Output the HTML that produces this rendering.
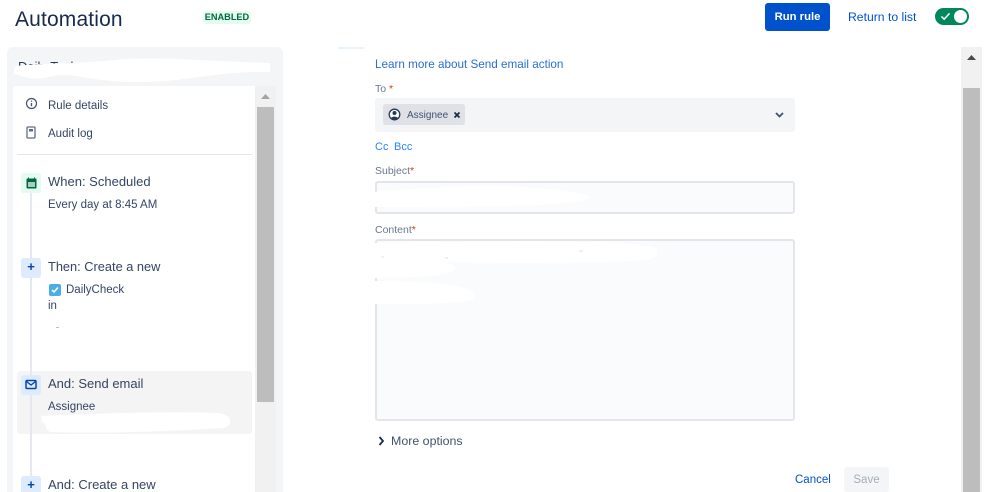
<!DOCTYPE html>
<html><head><meta charset="utf-8"><style>
html,body{margin:0;padding:0;background:#fff}
#p{position:relative;width:999px;height:492px;overflow:hidden;background:#fff;font-family:"Liberation Sans",sans-serif;color:#42526e;font-size:12px}
#p div,#p span.a,#p svg{position:absolute}
.t{white-space:nowrap;line-height:16px}
.big{font-size:13px;color:#344563}
.s{font-size:11.5px;color:#344563}
.lnk{color:#0052cc}
.lab{font-size:10.5px;color:#6b778c}
.req{color:#de350b}
.ic{width:20px;height:20px;border-radius:3px;left:21px}
</style></head><body><div id="p">
<div class="t" style="left:15px;top:7px;font-size:21px;line-height:26px;color:#172b4d;letter-spacing:.15px">Automation</div>
<div style="left:203px;top:11px;width:48px;height:13px;background:#e3fcef;border-radius:3px"></div>
<div class="t" style="left:203px;top:11px;width:48px;color:#006644;font-size:9.2px;font-weight:bold;line-height:13px;text-align:center">ENABLED</div>
<div class="t" style="left:765px;top:3px;width:65px;height:28px;background:#0052cc;border-radius:3px;color:#fff;font-weight:bold;font-size:11.3px;line-height:28px;text-align:center">Run rule</div>
<div class="t lnk" style="left:848px;top:9px;font-size:12.2px">Return to list</div>
<div style="left:935px;top:8px;width:34px;height:17px;background:#00875a;border-radius:9px"></div>
<div style="left:954px;top:10px;width:13px;height:13px;background:#fff;border-radius:50%"></div>
<svg style="left:940px;top:12px" width="11" height="9" viewBox="0 0 12 10"><path d="M1.500 5l3 3 6-6.500" fill="none" stroke="#fff" stroke-width="1.700"/></svg>

<div style="left:7px;top:47px;width:276px;height:460px;background:#f4f5f7;border-radius:6px"></div>
<div class="t" style="left:18px;top:59px;font-size:13px;color:#253858">Daily Tasks</div>
<div class="t" style="left:242px;top:58px;font-size:11px;color:#8993a4">...</div>
<svg style="left:14px;top:58px" width="258" height="26" viewBox="0 0 258 26"><path d="M2 8C30 5 60 6 100 2S170 2 256 5v9C200 13 170 25 120 24S60 14 40 18 18 21 4 17 1 12 2 8z" fill="#fff"/></svg>
<div style="left:13px;top:86px;width:242px;height:406px;background:#fff;border-radius:3px 0 0 0"></div>
<div style="left:255px;top:86px;width:21px;height:406px;background:#f1f1f1"></div>
<div style="left:257px;top:107px;width:17px;height:295px;background:#bdbdbd"></div>
<svg style="left:260px;top:93px" width="11" height="7" viewBox="0 0 11 7"><path d="M5.500 1L10 6H1z" fill="#a3a3a3"/></svg>

<svg style="left:25px;top:97px" width="13" height="13" viewBox="0 0 13 13"><circle cx="6.500" cy="6.500" r="5" fill="none" stroke="#42526e" stroke-width="1.200"/><path d="M6.500 6v3.200M6.500 3.600v1.200" stroke="#42526e" stroke-width="1.300"/></svg>
<div class="t s" style="left:48px;top:97px;padding-top:1px">Rule details</div>
<svg style="left:26px;top:126px" width="11" height="13" viewBox="0 0 11 13"><rect x="1" y="1" width="8" height="11" rx="1" fill="none" stroke="#5e6c84" stroke-width="1.300"/><rect x="3" y="3" width="4" height="2.500" fill="#5e6c84"/></svg>
<div class="t s" style="left:48px;top:126px">Audit log</div>
<div style="left:17px;top:154px;width:235px;height:1px;background:#e4e6ea"></div>

<div style="left:30px;top:190px;width:2px;height:302px;background:#e6e8ef"></div>

<div class="ic" style="top:173px;background:#e3fcef"></div>
<svg style="left:26px;top:177px" width="11" height="12" viewBox="0 0 11 12"><rect x=".5" y="1.500" width="10" height="10" rx="1" fill="#006644"/><path d="M2.500 .5v2M8.500 .5v2" stroke="#006644"/><rect x="2" y="5" width="7" height="5" fill="#9fd3bd"/></svg>
<div class="t big" style="left:48px;top:174px">When: Scheduled</div>
<div class="t s" style="left:48px;top:197px">Every day at 8:45 AM</div>

<div class="ic" style="top:258px;background:#deebff"></div>
<div class="t" style="left:21px;top:259px;width:20px;text-align:center;color:#0747a6;font-weight:bold;font-size:13px">+</div>
<div class="t big" style="left:48px;top:259px;font-size:12.8px">Then: Create a new</div>
<div style="left:49px;top:284px;width:12px;height:12px;background:#4bade8;border-radius:2px"></div>
<svg style="left:50px;top:285px" width="10" height="10" viewBox="0 0 10 10"><path d="M2 5l2 2 4-4.500" fill="none" stroke="#fff" stroke-width="1.600"/></svg>
<div class="t s" style="left:66px;top:282px">DailyCheck</div>
<div class="t s" style="left:48px;top:298px">in</div>
<div style="left:56px;top:327px;width:3px;height:1px;background:#a9c4e4"></div>

<div style="left:17px;top:371px;width:235px;height:63px;background:#f4f4f4;border-radius:3px"></div>
<div style="left:30px;top:371px;width:2px;height:63px;background:#e6e8ef"></div>
<div class="ic" style="top:375px;background:#deebff"></div>
<svg style="left:25px;top:379px" width="12" height="11" viewBox="0 0 12 11"><rect x="1" y="1.500" width="10" height="8" rx="1" fill="none" stroke="#0747a6" stroke-width="1.500"/><path d="M1.500 2.500L6 6l4.500-3.500" fill="none" stroke="#0747a6" stroke-width="1.300"/></svg>
<div class="t big" style="left:48px;top:376px">And: Send email</div>
<div class="t s" style="left:48px;top:399px">Assignee</div>
<svg style="left:38px;top:411px" width="196" height="23" viewBox="0 0 196 23"><path d="M3 5C50 3 120 0 180 2c14 1 16 12 6 15C140 20 60 23 12 21 6 18 9 12 4 11z" fill="#fff"/></svg>

<div class="ic" style="top:476px;background:#deebff"></div>
<div class="t" style="left:21px;top:477px;width:20px;text-align:center;color:#0747a6;font-weight:bold;font-size:13px">+</div>
<div class="t big" style="left:48px;top:477px">And: Create a new</div>

<div style="left:338px;top:47px;width:26px;height:2px;background:#e9f2ff"></div>
<div class="t lnk" style="left:375px;top:57px;font-size:11.700px;color:#2a6fd0">Learn more about Send email action</div>
<div class="t lab" style="left:375px;top:81px">To <span class="req">*</span></div>
<div style="left:375px;top:98px;width:420px;height:34px;background:#f4f5f7;border-radius:3px"></div>
<div style="left:383px;top:104px;width:82px;height:21px;background:#dfe1e6;border-radius:3px"></div>
<svg style="left:388px;top:108px" width="13" height="13" viewBox="0 0 13 13"><circle cx="6.500" cy="6.500" r="5.300" fill="#fff" stroke="#253858" stroke-width="1.300"/><circle cx="6.500" cy="5" r="2" fill="#253858"/><path d="M3 10.500c.5-2.500 6.500-2.500 7 0l-3.500 1.500z" fill="#253858"/></svg>
<div class="t" style="left:407px;top:108px;font-size:10px;color:#42526e">Assignee</div>
<svg style="left:453px;top:111px" width="8" height="8" viewBox="0 0 8 8"><path d="M1.500 1.500l5 5M6.500 1.500l-5 5" stroke="#172b4d" stroke-width="1.700"/></svg>
<svg style="left:775px;top:112px" width="9" height="6" viewBox="0 0 9 6"><path d="M1 1l3.500 3.500L8 1" fill="none" stroke="#42526e" stroke-width="1.800"/></svg>
<div class="t" style="left:375px;top:139px;font-size:11px;color:#2684ff">Cc</div>
<div class="t" style="left:394px;top:139px;font-size:11px;color:#2684ff">Bcc</div>
<div class="t lab" style="left:375px;top:163px">Subject<span class="req">*</span></div>
<div style="left:375px;top:181px;width:416px;height:29px;background:#fafbfc;border:2px solid #e3e5ea;border-radius:3px"></div>
<svg style="left:375px;top:184px" width="216" height="27" viewBox="0 0 216 27"><path d="M0 8C60 3 110 0 150 3s60 6 64 10-30 8-80 9-90 1-134 1z" fill="#fff"/></svg>
<div class="t lab" style="left:375px;top:222px">Content<span class="req">*</span></div>
<div style="left:375px;top:239px;width:416px;height:178px;background:#fafbfc;border:2px solid #e3e5ea;border-radius:3px"></div>
<svg style="left:375px;top:241px" width="282" height="66" viewBox="0 0 282 66"><path d="M0 2C70 1 180-1 240 2s46 12 36 16-150 5-206 3c14 2 10 9 4 11-14 4-40 4-74 5z" fill="#fff"/><path d="M0 40c30 0 80 2 92 8s9 9 4 11c-14 4-60 4-96 4z" fill="#fff"/><path d="M6 16h3M70 17h3M204 10h4" stroke="#dfe2e8" stroke-width="1"/></svg>
<svg style="left:378px;top:436px" width="7" height="10" viewBox="0 0 7 10"><path d="M1.500 1l3.500 4-3.500 4" fill="none" stroke="#172b4d" stroke-width="1.800"/></svg>
<div class="t s" style="left:391px;top:433px;color:#42526e;font-size:12.400px">More options</div>
<div class="t lnk" style="left:795px;top:472px;font-size:11.500px">Cancel</div>
<div class="t" style="left:844px;top:467px;width:45px;height:25px;background:#f4f5f7;border-radius:3px;color:#a5adba;font-size:11.500px;line-height:26px;text-align:center">Save</div>

<div style="left:961px;top:47px;width:21px;height:445px;background:#f1f1f1"></div>
<div style="left:963px;top:88px;width:17px;height:404px;background:#bdbdbd"></div>
<svg style="left:966px;top:54px" width="11" height="7" viewBox="0 0 11 7"><path d="M5.500 1L10 6H1z" fill="#4a4a4a"/></svg>
</div></body></html>
